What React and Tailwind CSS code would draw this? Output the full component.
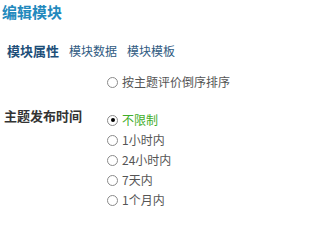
import React from "react";

const font = { fontFamily: '"Noto Sans CJK SC", "Noto Sans", sans-serif' };

const Radio = ({ checked }) => (
  <span className="relative inline-block w-[11px] h-[11px] rounded-full border border-[#8a8a8a] bg-white shrink-0">
    {checked && (
      <span className="absolute left-[2.5px] top-[2.5px] w-[4px] h-[4px] rounded-full bg-black" />
    )}
  </span>
);

const Option = ({ label, checked, green }) => (
  <label className="flex items-center h-[20px] gap-[4px]">
    <Radio checked={checked} />
    <span className={`text-[12px] leading-none ${green ? "text-[#3fae2a]" : "text-[#555555]"}`}>{label}</span>
  </label>
);

export default function App() {
  const times = ["不限制", "1小时内", "24小时内", "7天内", "1个月内"];

  return (
    <div className="w-[263px] h-[216px] bg-white overflow-hidden" style={font}>
      <div className="pl-[2px] pt-[2px] text-[15px] leading-[20px] font-bold text-[#2289bd]">编辑模块</div>

      <div className="flex items-center gap-[10px] pl-[7px] mt-[21px] text-[12px] leading-[16px]">
        <span className="font-bold text-[13px] text-[#1d4e78]">模块属性</span>
        <span className="text-[#2f5a82]">模块数据</span>
        <span className="text-[#2f5a82]">模块模板</span>
      </div>

      <div className="pl-[107px] mt-[13px]">
        <Option label="按主题评价倒序排序" />
      </div>

      <div className="flex mt-[18px]">
        <div className="w-[107px] pl-[4px] -mt-[2px] text-[13px] leading-[16px] font-bold text-[#333333]">主题发布时间</div>
        <div className="flex flex-col">
          {times.map((t, i) => (
            <Option key={t} label={t} checked={i === 0} green={i === 0} />
          ))}
        </div>
      </div>
    </div>
  );
}
